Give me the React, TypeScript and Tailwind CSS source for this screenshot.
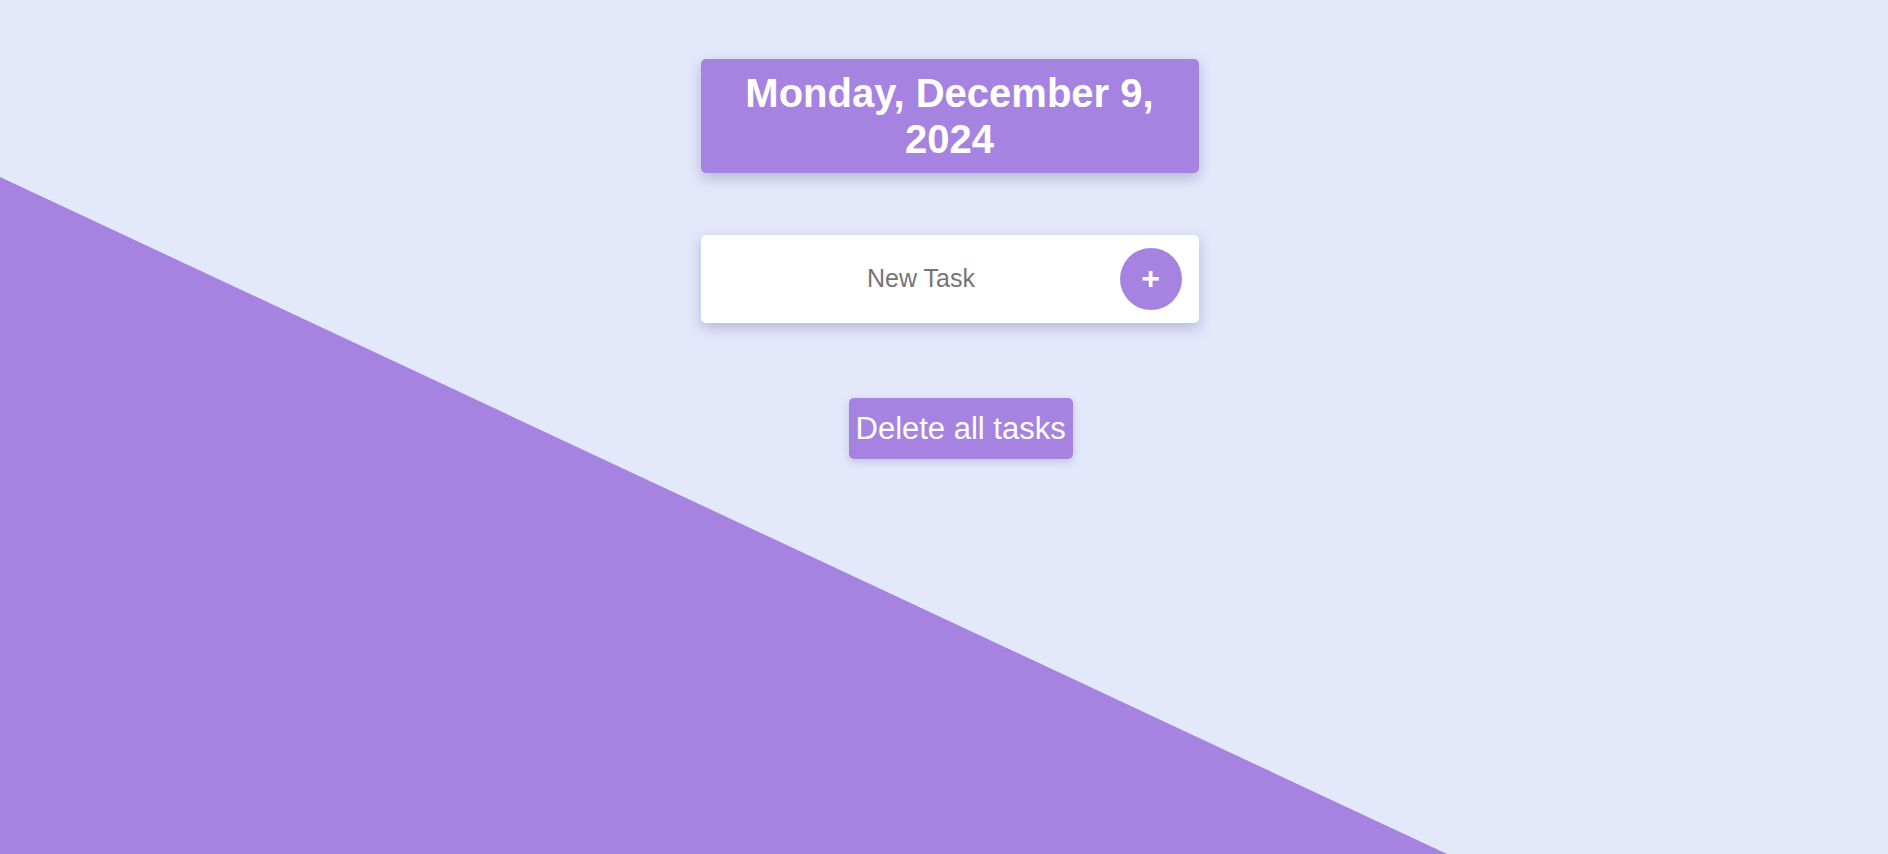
import { useState } from 'react'

export default function App() {
  const [task, setTask] = useState('')

  return (
    <div className="relative min-h-[854px] w-full overflow-hidden bg-[#e3e8fb] font-['Liberation_Sans',Arial,sans-serif]">
      <div className="absolute inset-0 bg-[#a683e1] [clip-path:polygon(0_177px,0_100%,1447px_100%)]" />

      <div className="relative flex justify-center pl-[11px] pt-[59px]">
        <div className="flex w-[498px] flex-col">
          <h1 className="rounded-[5px] bg-[#a683e1] px-4 py-[11px] text-center text-[40px] font-bold leading-[46px] text-white shadow-[0_5px_14px_rgba(60,60,120,0.28)]">
            Monday, December 9, 2024
          </h1>

          <div className="mt-[62px] flex h-[88px] items-center rounded-[5px] bg-white pl-[22px] pr-[17px] shadow-[0_5px_14px_rgba(60,60,120,0.28)]">
            <input
              value={task}
              onChange={e => setTask(e.target.value)}
              placeholder="New Task"
              className="min-w-0 flex-1 bg-transparent text-center text-[25px] text-gray-800 outline-none placeholder:text-[#757575]"
            />
            <button className="flex h-[62px] w-[62px] shrink-0 items-center justify-center rounded-full bg-[#a683e1] pb-[2px] text-[32px] font-bold leading-none text-white">
              +
            </button>
          </div>

          <button className="ml-[148px] mt-[75px] self-start rounded-[5px] bg-[#a683e1] px-[7px] py-[12px] text-[31px] leading-[37px] text-white shadow-[0_3px_8px_rgba(60,60,120,0.2)]">
            Delete all tasks
          </button>
        </div>
      </div>
    </div>
  )
}
